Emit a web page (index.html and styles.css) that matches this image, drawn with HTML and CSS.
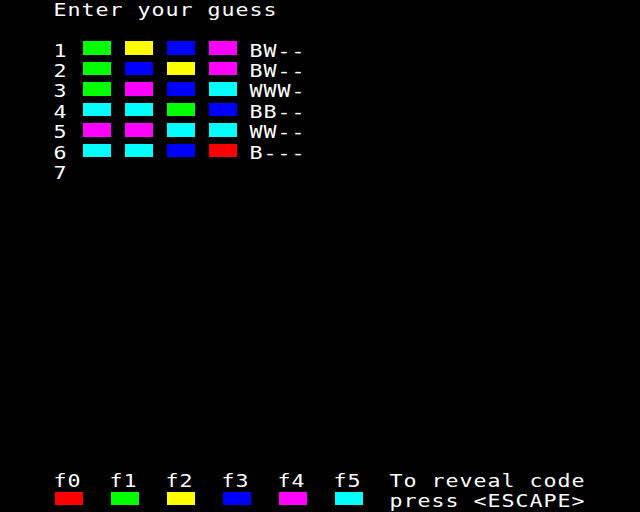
FILE: index.html
```html
<!DOCTYPE html>
<html lang="en">
<head>
<meta charset="utf-8">
<title>Mastermind</title>
<link rel="stylesheet" href="styles.css">
</head>
<body>
<div class="screen">
  <div class="row"><span class="txt c1">Enter your guess</span></div>
  <div class="row"></div>
  <div class="row"><span class="txt c1">1</span><span class="blk b3 green"></span><span class="blk b6 yellow"></span><span class="blk b9 blue"></span><span class="blk b12 magenta"></span><span class="txt c15">BW--</span></div>
  <div class="row"><span class="txt c1">2</span><span class="blk b3 green"></span><span class="blk b6 blue"></span><span class="blk b9 yellow"></span><span class="blk b12 magenta"></span><span class="txt c15">BW--</span></div>
  <div class="row"><span class="txt c1">3</span><span class="blk b3 green"></span><span class="blk b6 magenta"></span><span class="blk b9 blue"></span><span class="blk b12 cyan"></span><span class="txt c15">WWW-</span></div>
  <div class="row"><span class="txt c1">4</span><span class="blk b3 cyan"></span><span class="blk b6 cyan"></span><span class="blk b9 green"></span><span class="blk b12 blue"></span><span class="txt c15">BB--</span></div>
  <div class="row"><span class="txt c1">5</span><span class="blk b3 magenta"></span><span class="blk b6 magenta"></span><span class="blk b9 cyan"></span><span class="blk b12 cyan"></span><span class="txt c15">WW--</span></div>
  <div class="row"><span class="txt c1">6</span><span class="blk b3 cyan"></span><span class="blk b6 cyan"></span><span class="blk b9 blue"></span><span class="blk b12 red"></span><span class="txt c15">B---</span></div>
  <div class="row"><span class="txt c1">7</span></div>
  <div class="spacer"></div>
  <div class="row"><span class="txt c1">f0</span><span class="txt c5">f1</span><span class="txt c9">f2</span><span class="txt c13">f3</span><span class="txt c17">f4</span><span class="txt c21">f5</span><span class="txt c25">To reveal code</span></div>
  <div class="row"><span class="blk b1 red"></span><span class="blk b5 green"></span><span class="blk b9 yellow"></span><span class="blk b13 blue"></span><span class="blk b17 magenta"></span><span class="blk b21 cyan"></span><span class="txt c25">press &lt;ESCAPE&gt;</span></div>
</div>
</body>
</html>
```
FILE: styles.css
```css
html, body {
  margin: 0;
  padding: 0;
  background: #000;
  width: 640px;
  height: 512px;
  overflow: hidden;
}

.screen {
  padding-left: 40.5px;
  display: flex;
  flex-direction: column;
}

.row {
  display: grid;
  grid-template-columns: repeat(40, 14px);
  height: 20.48px;
  align-items: start;
}

.spacer {
  height: calc(20.48px * 14);
}

.txt {
  color: #fff;
  font-family: "DejaVu Sans Mono", monospace;
  font-size: 18px;
  line-height: 21px;
  margin-top: -1.4px;
  letter-spacing: 0.83px;
  white-space: nowrap;
  transform: translateX(-1.5px) scaleX(1.2);
  transform-origin: left top;
  grid-row: 1;
}

.blk {
  height: 13.6px;
  margin-top: 0.4px;
  grid-row: 1;
}

.c1 { grid-column: 2 / span 20; }
.c5 { grid-column: 6 / span 3; }
.c9 { grid-column: 10 / span 3; }
.c13 { grid-column: 14 / span 3; }
.c15 { grid-column: 16 / span 5; }
.c17 { grid-column: 18 / span 3; }
.c21 { grid-column: 22 / span 3; }
.c25 { grid-column: 26 / span 15; }

.b1 { grid-column: 2 / span 2; }
.b3 { grid-column: 4 / span 2; }
.b5 { grid-column: 6 / span 2; }
.b6 { grid-column: 7 / span 2; }
.b9 { grid-column: 10 / span 2; }
.b12 { grid-column: 13 / span 2; }
.b13 { grid-column: 14 / span 2; }
.b17 { grid-column: 18 / span 2; }
.b21 { grid-column: 22 / span 2; }

.red { background: #ff0000; }
.green { background: #00ff00; }
.yellow { background: #ffff00; }
.blue { background: #0000ff; }
.magenta { background: #ff00ff; }
.cyan { background: #00ffff; }
```
